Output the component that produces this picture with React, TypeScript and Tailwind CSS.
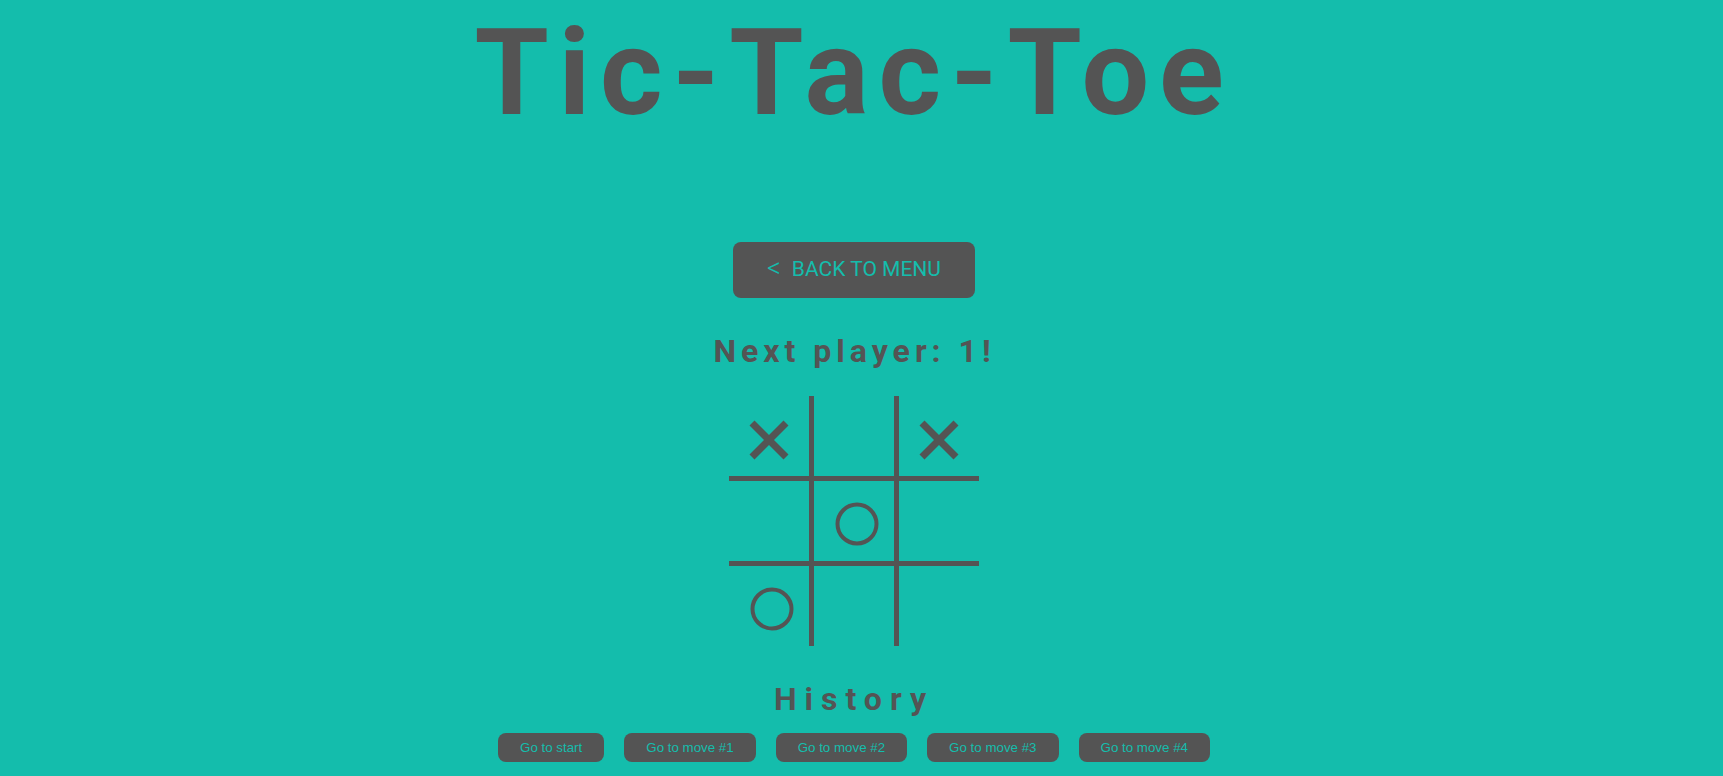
import { useState } from "react";

type Mark = "X" | "O" | null;

const moves = ["Go to start", "Go to move #1", "Go to move #2", "Go to move #3", "Go to move #4"];

function Cross() {
  return (
    <svg width="40" height="40" viewBox="0 0 40 40" className="mt-2">
      <line x1="3" y1="3" x2="37" y2="37" stroke="#545454" strokeWidth="7" />
      <line x1="37" y1="3" x2="3" y2="37" stroke="#545454" strokeWidth="7" />
    </svg>
  );
}

function Circle() {
  return (
    <svg width="44" height="44" viewBox="0 0 44 44" className="mt-[5px] ml-[5px]">
      <circle cx="22" cy="22" r="19.5" fill="none" stroke="#545454" strokeWidth="4" />
    </svg>
  );
}

export default function App() {
  const [squares] = useState<Mark[]>(["X", null, "X", null, "O", null, "O", null, null]);

  return (
    <div className="min-h-screen w-full bg-[#14bdac] text-[#545454] pr-[15px]">
      <div className="flex flex-col items-center">
        <h1
          className="pt-[3px] text-[120px] leading-[140px] font-bold tracking-[9.7px]"
          style={{ fontFamily: "Roboto, sans-serif" }}
        >
          Tic-Tac-Toe
        </h1>

        <button
          className="mt-[99px] flex h-[56px] w-[242px] items-center justify-center gap-[11px] rounded-lg bg-[#545454] text-[21px] text-[#14bdac]"
          style={{ fontFamily: "Roboto, sans-serif" }}
        >
          <span className="text-[27px] font-light leading-none -mt-[3px]">&lt;</span>
          <span>BACK TO MENU</span>
        </button>

        <h2
          className="mt-[33px] text-[32px] leading-[40px] font-bold tracking-[5px] pl-[1px]"
          style={{ fontFamily: "Roboto, sans-serif" }}
        >
          Next player: 1!
        </h2>

        <div className="mt-[25px] grid grid-cols-[80px_80px_80px] grid-rows-[80px_80px_80px] gap-[5px] bg-[#545454]">
          {squares.map((sq, i) => (
            <div key={i} className="flex items-center justify-center bg-[#14bdac]">
              {sq === "X" && <Cross />}
              {sq === "O" && <Circle />}
            </div>
          ))}
        </div>

        <h2
          className="mt-[33px] text-[32px] leading-[40px] font-bold tracking-[8px]"
          style={{ fontFamily: "Roboto, sans-serif" }}
        >
          History
        </h2>

        <div className="mt-[14px] flex gap-5">
          {moves.map((m) => (
            <button
              key={m}
              className="h-[29px] rounded-lg bg-[#545454] px-[22px] text-[13.333px] text-[#14bdac]"
              style={{ fontFamily: "'Liberation Sans', Arial, sans-serif" }}
            >
              {m}
            </button>
          ))}
        </div>
      </div>
    </div>
  );
}
